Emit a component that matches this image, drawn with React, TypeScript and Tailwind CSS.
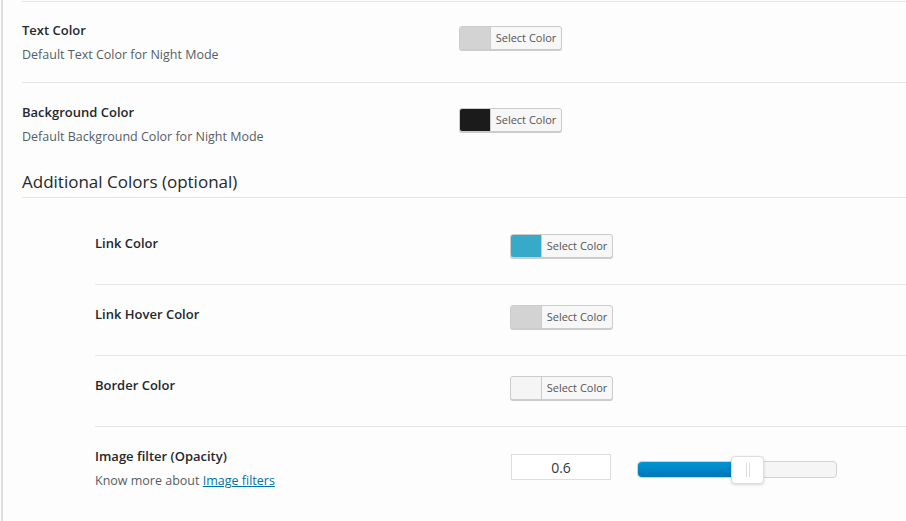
const font = { fontFamily: '"Open Sans", "Noto Sans", Arial, sans-serif' };

function ColorButton(props: { color: string }) {
  return (
    <button className="flex h-6 w-[103px] items-stretch overflow-hidden rounded-[3px] border border-[#cccccc] bg-[#f7f7f7] shadow-[0_1px_0_#cccccc]">
      <span className="w-[31px] border-r border-[#cccccc]" style={{ background: props.color }} />
      <span className="flex flex-1 items-center justify-center text-[11px] text-[#555555]">Select Color</span>
    </button>
  );
}

function MainRow(props: { title: string, desc: string, color: string, last?: boolean }) {
  return (
    <div className={props.last ? 'flex h-[80px] pt-px' : 'flex h-[81px] border-b border-[#e5e5e5]'}>
      <div className="w-[437px] pt-[18px]">
        <p className="text-[13px] font-semibold leading-5 text-[#23282d]">{props.title}</p>
        <p className="mt-[5px] text-[12.5px] leading-5 text-[#555d66]">{props.desc}</p>
      </div>
      <div className="pt-[24px]">
        <ColorButton color={props.color} />
      </div>
    </div>
  );
}

function SubRow(props: { title: string, color: string, first?: boolean }) {
  return (
    <div className={props.first ? 'flex h-[87px] border-b border-[#e5e5e5] pt-4' : 'flex h-[71px] border-b border-[#e5e5e5]'}>
      <div className="w-[415px] pt-[19px]">
        <p className="text-[13px] font-semibold leading-5 text-[#23282d]">{props.title}</p>
      </div>
      <div className="pt-[20px]">
        <ColorButton color={props.color} />
      </div>
    </div>
  );
}

export default function App() {
  return (
    <div className="flex h-[521px] w-[906px] overflow-hidden bg-[#fdfdfd]" style={font}>
      <div className="ml-px w-[2px] bg-[#dedede]" />
      <div className="flex-1 pl-[19px]">
        <div className="mt-px border-t border-[#e5e5e5]">
          <MainRow title="Text Color" desc="Default Text Color for Night Mode" color="#d3d3d3" />
          <MainRow title="Background Color" desc="Default Background Color for Night Mode" color="#1b1b1b" last />
        </div>

        <h2 className="border-b border-[#e5e5e5] pt-[7px] pb-[3px] text-[17px] font-normal leading-6 text-[#23282d]">
          Additional Colors (optional)
        </h2>

        <div className="ml-[73px]">
          <SubRow title="Link Color" color="#37a9c9" first />
          <SubRow title="Link Hover Color" color="#d3d3d3" />
          <SubRow title="Border Color" color="#f5f5f5" />

          <div className="flex h-[90px]">
            <div className="w-[416px] pt-[19px]">
              <p className="text-[13px] font-semibold leading-5 text-[#23282d]">Image filter (Opacity)</p>
              <p className="mt-[5px] text-[12.5px] leading-5 text-[#555d66]">
                Know more about <a href="#" className="text-[#0073aa] underline">Image filters</a>
              </p>
            </div>
            <div className="flex items-start pt-[27px]">
              <div className="flex h-[26px] w-[100px] items-center justify-center border border-[#dddddd] bg-white text-[14px] text-[#32373c]">
                0.6
              </div>
              <div className="relative ml-[26px] mt-[7px] h-[17px] w-[200px] rounded-[4px] border border-[#d3d3d3] bg-[#f5f5f5]">
                <div className="h-full w-[96px] rounded-l-[4px] bg-gradient-to-b from-[#0095d5] to-[#0077b6]" />
                <div className="absolute top-[-6px] left-[93px] flex h-[28px] w-[33px] items-center justify-center gap-[2px] rounded-[4px] border border-[#dddddd] bg-white shadow-[0_1px_3px_rgba(0,0,0,0.15)]">
                  <span className="h-[14px] w-px bg-[#dddddd]" />
                  <span className="h-[14px] w-px bg-[#dddddd]" />
                </div>
              </div>
            </div>
          </div>
        </div>
      </div>
    </div>
  );
}
